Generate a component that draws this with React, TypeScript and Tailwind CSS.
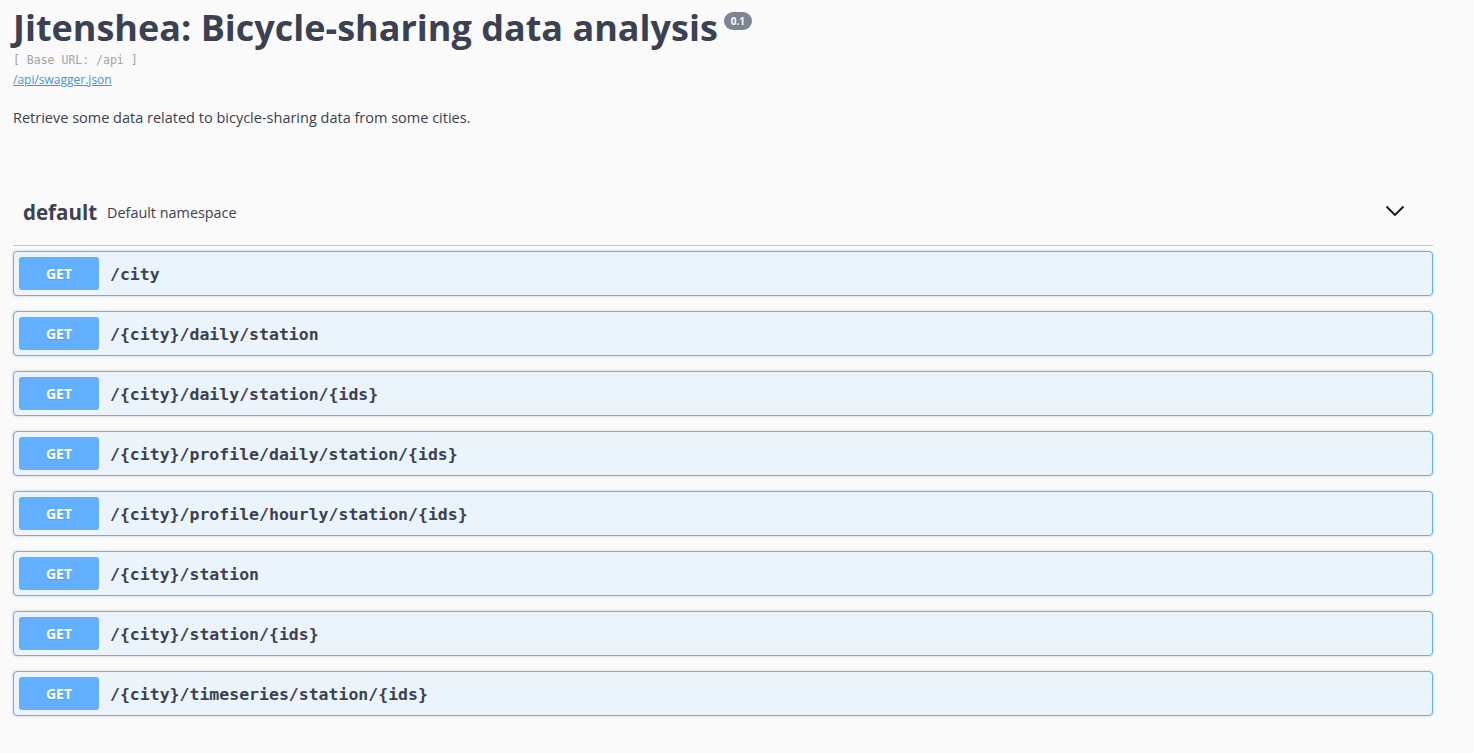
const paths = [
  "/city",
  "/{city}/daily/station",
  "/{city}/daily/station/{ids}",
  "/{city}/profile/daily/station/{ids}",
  "/{city}/profile/hourly/station/{ids}",
  "/{city}/station",
  "/{city}/station/{ids}",
  "/{city}/timeseries/station/{ids}",
];

function Opblock({ path }: { path: string }) {
  return (
    <div className="mb-[15px] rounded-[4px] border border-[#61affe] bg-[#ebf3fb] shadow-[0_0_3px_rgba(0,0,0,0.19)]">
      <div className="flex items-center p-[5px]">
        <span className="flex h-[33px] w-[80px] items-center justify-center rounded-[3px] bg-[#61affe] text-[14px] font-bold text-white [text-shadow:0_1px_0_rgba(0,0,0,0.1)]">
          GET
        </span>
        <span className="pl-[11px] pt-[3px] font-['DejaVu_Sans_Mono',monospace] text-[16.5px] font-bold text-[#3b4151]">
          {path}
        </span>
      </div>
    </div>
  );
}

export default function App() {
  return (
    <div className="min-h-[753px] bg-[#fafafa] font-['Open_Sans',sans-serif] text-[#3b4151]">
      <div className="w-[1433px] pl-[13px]">
        <div className="pt-[3px]">
          <div className="flex items-start">
            <h1 className="text-[36px] leading-[50px] font-bold text-[#3b4151]">
              Jitenshea: Bicycle-sharing data analysis
            </h1>
            <span className="ml-[6px] mt-[9px] rounded-full bg-[#7d8492] px-[7px] py-[1px] text-[10px] leading-[16px] font-bold text-white">
              0.1
            </span>
          </div>
          <div className="-mt-[1px] font-['DejaVu_Sans_Mono',monospace] text-[11.5px] leading-[16px] text-[#a3a3a3]">
            [ Base URL: /api ]
          </div>
          <a className="mt-[2px] block text-[12px] leading-[20px] text-[#4990e2] underline" href="#">
            /api/swagger.json
          </a>
          <p className="mt-[18px] text-[14.5px] leading-[20px] text-[#3b4151]">
            Retrieve some data related to bicycle-sharing data from some cities.
          </p>
        </div>

        <div className="mt-[52px]">
          <div className="flex h-[66px] items-center border-b border-[#c4c6cb] pl-[10px] pr-[28px]">
            <span className="text-[20.5px] font-bold text-[#3b4151]">default</span>
            <span className="ml-[10px] text-[14.4px] text-[#3b4151]">Default namespace</span>
            <svg className="ml-auto -mt-[3px]" width="20" height="12" viewBox="0 0 20 12">
              <polyline points="1.5,1.5 10,10 18.5,1.5" fill="none" stroke="#111" strokeWidth="1.8" />
            </svg>
          </div>
          <div className="pt-[5px]">
            {paths.map((p) => (
              <Opblock key={p} path={p} />
            ))}
          </div>
        </div>
      </div>
    </div>
  );
}
